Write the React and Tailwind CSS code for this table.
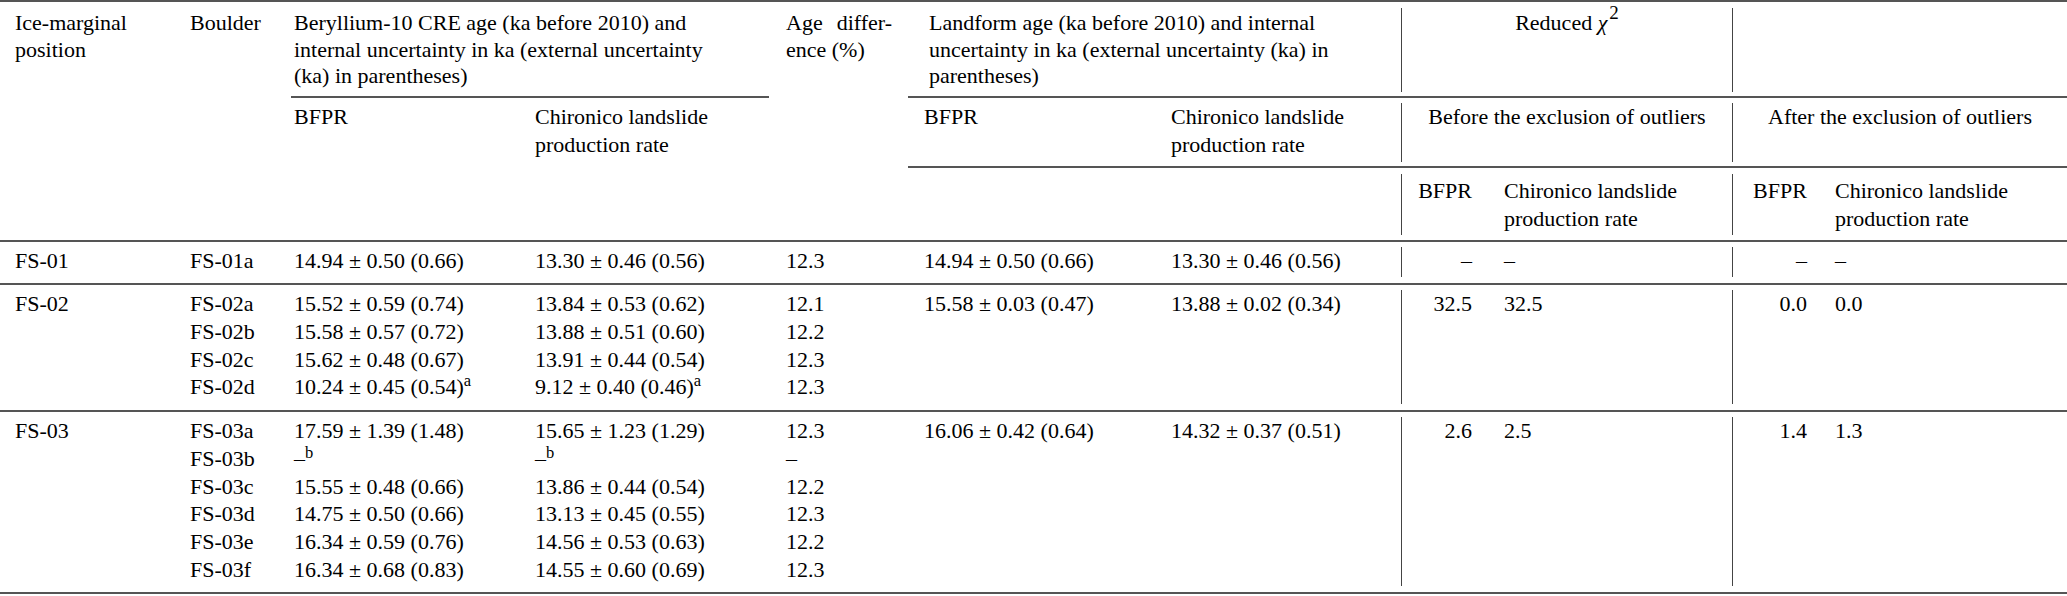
import React from "react";

// column template shared by header and body so everything lines up
const COLS =
  "grid grid-cols-[178px_102px_247px_245px_136px_249px_244px_79px_252px_83px_252px]";

const val = (a, b, c, sup) => (
  <>
    {a} ± {b} ({c})
    {sup && <sup>{sup}</sup>}
  </>
);

const dash = (sup) => (
  <>
    –<sup>{sup}</sup>
  </>
);

const groups = [
  {
    pos: "FS-01",
    rows: [["FS-01a", val("14.94", "0.50", "0.66"), val("13.30", "0.46", "0.56"), "12.3"]],
    land: [val("14.94", "0.50", "0.66"), val("13.30", "0.46", "0.56")],
    chi: ["–", "–", "–", "–"],
  },
  {
    pos: "FS-02",
    rows: [
      ["FS-02a", val("15.52", "0.59", "0.74"), val("13.84", "0.53", "0.62"), "12.1"],
      ["FS-02b", val("15.58", "0.57", "0.72"), val("13.88", "0.51", "0.60"), "12.2"],
      ["FS-02c", val("15.62", "0.48", "0.67"), val("13.91", "0.44", "0.54"), "12.3"],
      ["FS-02d", val("10.24", "0.45", "0.54", "a"), val("9.12", "0.40", "0.46", "a"), "12.3"],
    ],
    land: [val("15.58", "0.03", "0.47"), val("13.88", "0.02", "0.34")],
    chi: ["32.5", "32.5", "0.0", "0.0"],
  },
  {
    pos: "FS-03",
    rows: [
      ["FS-03a", val("17.59", "1.39", "1.48"), val("15.65", "1.23", "1.29"), "12.3"],
      ["FS-03b", dash("b"), dash("b"), "–"],
      ["FS-03c", val("15.55", "0.48", "0.66"), val("13.86", "0.44", "0.54"), "12.2"],
      ["FS-03d", val("14.75", "0.50", "0.66"), val("13.13", "0.45", "0.55"), "12.3"],
      ["FS-03e", val("16.34", "0.59", "0.76"), val("14.56", "0.53", "0.63"), "12.2"],
      ["FS-03f", val("16.34", "0.68", "0.83"), val("14.55", "0.60", "0.69"), "12.3"],
    ],
    land: [val("16.06", "0.42", "0.64"), val("14.32", "0.37", "0.51")],
    chi: ["2.6", "2.5", "1.4", "1.3"],
  },
];

const Header = () => (
  <div className={`${COLS} border-y-2 border-[#555]`}>
    {/* row A */}
    <div className="col-start-1 row-start-1 row-span-3 pl-[15px] pt-[8px] leading-[26.7px]">
      Ice-marginal
      <br />
      position
    </div>
    <div className="col-start-2 row-start-1 row-span-3 pl-[12px] pt-[8px] leading-[26.7px]">
      Boulder
    </div>
    <div className="col-start-3 col-span-2 row-start-1 ml-[11px] mr-[3px] pl-[3px] border-b-2 border-[#555] pt-[8px] pb-[6px] leading-[26.7px]">
      Beryllium-10 CRE age (ka before 2010) and
      <br />
      internal uncertainty in ka (external uncertainty
      <br />
      (ka) in parentheses)
    </div>
    <div className="col-start-5 row-start-1 row-span-3 pl-[14px] pt-[8px] leading-[26.7px]">
      <div className="flex w-[106px] justify-between">
        <span>Age</span>
        <span>differ-</span>
      </div>
      ence (%)
    </div>
    <div className="col-start-6 col-span-2 row-start-1 pl-[21px] border-b-2 border-[#555] pt-[8px] pb-[6px] leading-[26.7px]">
      Landform age (ka before 2010) and internal
      <br />
      uncertainty in ka (external uncertainty (ka) in
      <br />
      parentheses)
    </div>
    <div className="col-start-8 col-span-2 row-start-1 border-b-2 border-[#555] pt-[6px] pb-[4px]">
      <div className="h-full border-l border-[#444] pt-[2px] text-center leading-[26.7px]">
        Reduced <i>χ</i>
        <sup className="text-[19px] -top-[11px] ml-[2px]">2</sup>
      </div>
    </div>
    <div className="col-start-10 col-span-2 row-start-1 border-b-2 border-[#555] pt-[6px] pb-[4px]">
      <div className="h-full border-l border-[#444]" />
    </div>

    {/* row B */}
    <div className="col-start-3 row-start-2 row-span-2 pl-[14px] pt-[5px]">BFPR</div>
    <div className="col-start-4 row-start-2 row-span-2 pl-[8px] pt-[5px]">
      Chironico landslide
      <br />
      production rate
    </div>
    <div className="col-start-6 row-start-2 pl-[16px] pt-[5px] pb-[8px] border-b-2 border-[#555]">
      BFPR
    </div>
    <div className="col-start-7 row-start-2 pl-[14px] pt-[5px] pb-[8px] border-b-2 border-[#555]">
      Chironico landslide
      <br />
      production rate
    </div>
    <div className="col-start-8 col-span-2 row-start-2 border-b-2 border-[#555] pt-[5px] pb-[4px]">
      <div className="h-full border-l border-[#444] text-center">
        Before the exclusion of outliers
      </div>
    </div>
    <div className="col-start-10 col-span-2 row-start-2 border-b-2 border-[#555] pt-[5px] pb-[4px]">
      <div className="h-full border-l border-[#444] text-center">
        After the exclusion of outliers
      </div>
    </div>

    {/* row C */}
    <div className="col-start-8 row-start-3 pt-[6px] pb-[5px]">
      <div className="h-full border-l border-[#444] pt-[3px] pr-[8px] text-right">BFPR</div>
    </div>
    <div className="col-start-9 row-start-3 pl-[24px] pt-[9px] pb-[7px]">
      Chironico landslide
      <br />
      production rate
    </div>
    <div className="col-start-10 row-start-3 pt-[6px] pb-[5px]">
      <div className="h-full border-l border-[#444] pt-[3px] pl-[20px]">BFPR</div>
    </div>
    <div className="col-start-11 row-start-3 pl-[20px] pt-[9px] pb-[7px]">
      Chironico landslide
      <br />
      production rate
    </div>
  </div>
);

const Band = ({ g }) => {
  const col = (i) => g.rows.map((r) => <div key={r[0]}>{r[i]}</div>);
  return (
    <div className={`${COLS} border-b-2 border-[#555] whitespace-nowrap`}>
      <div className="pl-[15px] pt-[5px] pb-[9px]">{g.pos}</div>
      <div className="pl-[12px] pt-[5px] pb-[9px]">{col(0)}</div>
      <div className="pl-[14px] pt-[5px] pb-[9px]">{col(1)}</div>
      <div className="pl-[8px] pt-[5px] pb-[9px]">{col(2)}</div>
      <div className="pl-[14px] pt-[5px] pb-[9px]">{col(3)}</div>
      <div className="pl-[16px] pt-[5px]">{g.land[0]}</div>
      <div className="pl-[14px] pt-[5px]">{g.land[1]}</div>
      <div className="pt-[5px] pb-[6px]">
        <div className="h-full border-l border-[#444] pr-[8px] text-right">{g.chi[0]}</div>
      </div>
      <div className="pl-[24px] pt-[5px]">{g.chi[1]}</div>
      <div className="pt-[5px] pb-[6px]">
        <div className="h-full border-l border-[#444] pr-[8px] text-right">{g.chi[2]}</div>
      </div>
      <div className="pl-[20px] pt-[5px]">{g.chi[3]}</div>
    </div>
  );
};

export default function App() {
  return (
    <div className="w-[2067px] bg-white text-black text-[22px] leading-[27.67px] font-['Liberation_Serif','Times_New_Roman',serif]">
      <Header />
      {groups.map((g) => (
        <Band key={g.pos} g={g} />
      ))}
    </div>
  );
}
